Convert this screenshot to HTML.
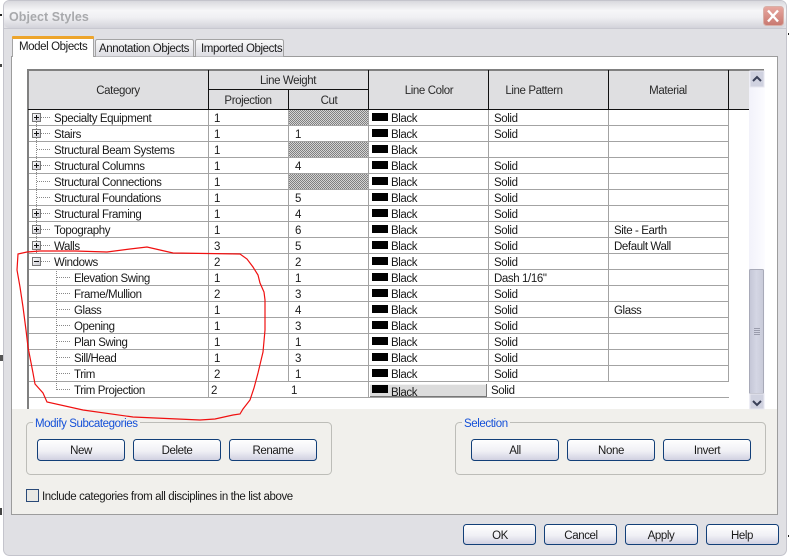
<!DOCTYPE html>
<html><head><meta charset="utf-8"><title>Object Styles</title>
<style>
html,body{margin:0;padding:0;background:#fff;width:790px;height:556px;overflow:hidden}
svg{display:block}
text{font-family:"Liberation Sans",sans-serif;font-size:11.5px;letter-spacing:-.4px;fill:#1a1a1a}
.b{text-anchor:middle}
.h{fill:#2a2a2a;text-anchor:middle}
.lg{fill:#1450d8}
.dot{stroke:#888;stroke-width:1;stroke-dasharray:1 1;fill:none}
.g{stroke:#a3a3a3;stroke-width:1;fill:none}
.k{stroke:#111;stroke-width:1;fill:none}
.btn{fill:url(#bg);stroke:#123f78;stroke-width:1}
.sw{fill:#000}
.pb{fill:url(#pg);stroke:#777}
</style></head><body>
<svg width="790" height="556" viewBox="0 0 790 556" xmlns="http://www.w3.org/2000/svg">
<defs>
<linearGradient id="tb" x1="0" y1="0" x2="0" y2="1"><stop offset="0" stop-color="#d9d9de"/><stop offset=".35" stop-color="#f6f6f8"/><stop offset=".6" stop-color="#f0f0f3"/><stop offset="1" stop-color="#d3d3da"/></linearGradient>
<linearGradient id="bg" x1="0" y1="0" x2="0" y2="1"><stop offset="0" stop-color="#ffffff"/><stop offset=".55" stop-color="#f0f0f5"/><stop offset="1" stop-color="#cfcfe0"/></linearGradient>
<linearGradient id="pg" x1="0" y1="0" x2="1" y2="1"><stop offset="0" stop-color="#fff"/><stop offset="1" stop-color="#c8c8d0"/></linearGradient>
<linearGradient id="th" x1="0" y1="0" x2="1" y2="0"><stop offset="0" stop-color="#c4c6d6"/><stop offset=".5" stop-color="#d4d6e4"/><stop offset="1" stop-color="#c8cad8"/></linearGradient>
<linearGradient id="tr" x1="0" y1="0" x2="1" y2="0"><stop offset="0" stop-color="#f2f2fa"/><stop offset="1" stop-color="#fcfcff"/></linearGradient>
<linearGradient id="cl" x1="0" y1="0" x2="0" y2="1"><stop offset="0" stop-color="#e8a8a0"/><stop offset="1" stop-color="#c87870"/></linearGradient>
<linearGradient id="tab" x1="0" y1="0" x2="0" y2="1"><stop offset="0" stop-color="#fafafa"/><stop offset="1" stop-color="#dcdce2"/></linearGradient>
<pattern id="ht" width="2" height="2" patternUnits="userSpaceOnUse"><rect width="2" height="2" fill="#d4d4d4"/><rect width="1" height="1" fill="#808080"/><rect x="1" y="1" width="1" height="1" fill="#808080"/></pattern>
</defs>

<!-- window -->
<rect x="3.5" y="0.5" width="783" height="555" rx="6" fill="#e0e0e4" stroke="#c4c4cc"/>
<rect x="4" y="1" width="782" height="27" rx="5" fill="url(#tb)"/>
<rect x="4" y="28" width="782" height="1" fill="#c8c8d0"/>
<text x="9" y="21" style="font-size:12.5px;font-weight:bold;fill:#a8a9ac;letter-spacing:.05px">Object Styles</text>
<rect x="763.5" y="6.5" width="20" height="19" rx="3" fill="url(#cl)" stroke="#d8b0a8"/>
<path d="M768 10.5l10 11M778 10.5l-10 11" stroke="#fff" stroke-width="2.4"/>
<rect x="0" y="14" width="2" height="2" fill="#222"/><rect x="0" y="64" width="2" height="3" fill="#444"/><rect x="0" y="355" width="3" height="6" fill="#555"/><rect x="0" y="508" width="2" height="7" fill="#444"/><rect x="788" y="33" width="1" height="2" fill="#222"/><rect x="788" y="535" width="1" height="2" fill="#222"/>

<!-- tab panel -->
<rect x="11.5" y="56.5" width="766" height="458" fill="#f1f0ec" stroke="#9c9c9c"/>
<rect x="12" y="57" width="765" height="352" fill="#fff"/>

<!-- tabs -->
<path d="M95.5 56.5V41.5q0-2 2-2h94q2 0 2 2v15" fill="url(#tab)" stroke="#a4a4a4"/>
<path d="M195.5 56.5V41.5q0-2 2-2h84q2 0 2 2v15" fill="url(#tab)" stroke="#a4a4a4"/>
<path d="M12.5 57V39.5q0-2 2-2h77q2 0 2 2V57" fill="#fff" stroke="#a4a4a4"/>
<rect x="12" y="36" width="82" height="3" rx="1" fill="#eda52c"/>
<rect x="13" y="55" width="80" height="3" fill="#fff"/>
<text x="19" y="50">Model Objects</text>
<text x="99" y="52">Annotation Objects</text>
<text x="201" y="52">Imported Objects</text>

<!-- table header -->
<rect x="28" y="70" width="721" height="40" fill="#dfdfe1"/>
<rect x="27" y="69" width="737" height="2" fill="#808080"/>
<rect x="27" y="69" width="2" height="340" fill="#808080"/>
<path class="k" d="M28 109.500H749M208.500 70V397M368.500 70V110M488.500 70V110M608.500 70V110M728.500 70V110M209 89.500H368M288.500 90V110"/>
<text class="h" x="118" y="94">Category</text>
<text class="h" x="288" y="84">Line Weight</text>
<text class="h" x="248" y="104">Projection</text>
<text class="h" x="329" y="104">Cut</text>
<text class="h" x="429" y="94">Line Color</text>
<text class="h" x="534" y="94">Line Pattern</text>
<text class="h" x="668" y="94">Material</text>

<!-- hatch -->
<rect x="289" y="110" width="79" height="15" fill="url(#ht)"/>
<rect x="289" y="142" width="79" height="15" fill="url(#ht)"/>
<rect x="289" y="174" width="79" height="15" fill="url(#ht)"/>

<!-- grid -->
<path class="g" d="M29 125.500H729M29 141.500H729M29 157.500H729M29 173.500H729M29 189.500H729M29 205.500H729M29 221.500H729M29 237.500H729M29 253.500H729M29 269.500H729M29 285.500H729M29 301.500H729M29 317.500H729M29 333.500H729M29 349.500H729M29 365.500H729M29 381.500H729M29 397.500H729"/>
<path class="g" d="M208.500 110V397M288.500 110V381M368.500 110V397M488.500 110V381M608.500 110V381M728.500 110V381"/>

<!-- tree lines -->
<path class="dot" d="M36.500 122V254M41 117.500H50M41 133.500H50M37 149.500H50M41 165.500H50M37 181.500H50M37 197.500H50M41 213.500H50M41 229.500H50M41 245.500H50M41 261.500H50"/>
<path class="dot" d="M56.500 271V390M57 277.500H71M57 293.500H71M57 309.500H71M57 325.500H71M57 341.500H71M57 357.500H71M57 373.500H71M57 389.500H71"/>
<g>
<rect class="pb" x="32.500" y="113.500" width="8" height="8"/><path class="k" d="M34 117.500H39M36.500 115V120"/>
<rect class="pb" x="32.500" y="129.500" width="8" height="8"/><path class="k" d="M34 133.500H39M36.500 131V136"/>
<rect class="pb" x="32.500" y="161.500" width="8" height="8"/><path class="k" d="M34 165.500H39M36.500 163V168"/>
<rect class="pb" x="32.500" y="209.500" width="8" height="8"/><path class="k" d="M34 213.500H39M36.500 211V216"/>
<rect class="pb" x="32.500" y="225.500" width="8" height="8"/><path class="k" d="M34 229.500H39M36.500 227V232"/>
<rect class="pb" x="32.500" y="241.500" width="8" height="8"/><path class="k" d="M34 245.500H39M36.500 243V248"/>
<rect class="pb" x="32.500" y="257.500" width="8" height="8"/><path class="k" d="M34 261.500H39"/>
</g>

<!-- category names -->
<text x="54" y="122">Specialty Equipment</text>
<text x="54" y="138">Stairs</text>
<text x="54" y="154">Structural Beam Systems</text>
<text x="54" y="170">Structural Columns</text>
<text x="54" y="186">Structural Connections</text>
<text x="54" y="202">Structural Foundations</text>
<text x="54" y="218">Structural Framing</text>
<text x="54" y="234">Topography</text>
<text x="54" y="250">Walls</text>
<text x="54" y="266">Windows</text>
<text x="74" y="282">Elevation Swing</text>
<text x="74" y="298">Frame/Mullion</text>
<text x="74" y="314">Glass</text>
<text x="74" y="330">Opening</text>
<text x="74" y="346">Plan Swing</text>
<text x="74" y="362">Sill/Head</text>
<text x="74" y="378">Trim</text>
<text x="74" y="394">Trim Projection</text>

<!-- projection -->
<text x="214" y="122">1</text><text x="214" y="138">1</text><text x="214" y="154">1</text><text x="214" y="170">1</text><text x="214" y="186">1</text><text x="214" y="202">1</text><text x="214" y="218">1</text><text x="214" y="234">1</text><text x="214" y="250">3</text><text x="214" y="266">2</text><text x="214" y="282">1</text><text x="214" y="298">2</text><text x="214" y="314">1</text><text x="214" y="330">1</text><text x="214" y="346">1</text><text x="214" y="362">1</text><text x="214" y="378">2</text><text x="211" y="394">2</text>

<!-- cut -->
<text x="295" y="138">1</text><text x="295" y="170">4</text><text x="295" y="202">5</text><text x="295" y="218">4</text><text x="295" y="234">6</text><text x="295" y="250">5</text><text x="295" y="266">2</text><text x="295" y="282">1</text><text x="295" y="298">3</text><text x="295" y="314">4</text><text x="295" y="330">3</text><text x="295" y="346">1</text><text x="295" y="362">3</text><text x="295" y="378">1</text><text x="291" y="394">1</text>

<!-- swatches -->
<path class="sw" d="M372 113h16v8h-16zM372 129h16v8h-16zM372 145h16v8h-16zM372 161h16v8h-16zM372 177h16v8h-16zM372 193h16v8h-16zM372 209h16v8h-16zM372 225h16v8h-16zM372 241h16v8h-16zM372 257h16v8h-16zM372 273h16v8h-16zM372 289h16v8h-16zM372 305h16v8h-16zM372 321h16v8h-16zM372 337h16v8h-16zM372 353h16v8h-16zM372 369h16v8h-16z"/>
<text x="391" y="122">Black</text><text x="391" y="138">Black</text><text x="391" y="154">Black</text><text x="391" y="170">Black</text><text x="391" y="186">Black</text><text x="391" y="202">Black</text><text x="391" y="218">Black</text><text x="391" y="234">Black</text><text x="391" y="250">Black</text><text x="391" y="266">Black</text><text x="391" y="282">Black</text><text x="391" y="298">Black</text><text x="391" y="314">Black</text><text x="391" y="330">Black</text><text x="391" y="346">Black</text><text x="391" y="362">Black</text><text x="391" y="378">Black</text>

<!-- black button -->
<rect x="370" y="384" width="117" height="12" fill="#dcdcdc"/>
<path d="M370 384.500H486.500V396" stroke="#f4f4f4" fill="none"/>
<path d="M370 396.500H487M486.500 384V396" stroke="#777" fill="none"/>
<rect x="372" y="385" width="16" height="8" fill="#000"/>
<text x="391" y="396">Black</text>

<!-- pattern -->
<text x="494" y="122">Solid</text><text x="494" y="138">Solid</text><text x="494" y="170">Solid</text><text x="494" y="186">Solid</text><text x="494" y="202">Solid</text><text x="494" y="218">Solid</text><text x="494" y="234">Solid</text><text x="494" y="250">Solid</text><text x="494" y="266">Solid</text><text x="494" y="282">Dash 1/16"</text><text x="494" y="298">Solid</text><text x="494" y="314">Solid</text><text x="494" y="330">Solid</text><text x="494" y="346">Solid</text><text x="494" y="362">Solid</text><text x="494" y="378">Solid</text><text x="491" y="394">Solid</text>

<!-- material -->
<text x="614" y="234">Site - Earth</text>
<text x="614" y="250">Default Wall</text>
<text x="614" y="314">Glass</text>

<!-- scrollbar -->
<rect x="749" y="71" width="16" height="338" fill="url(#tr)"/>
<rect x="750" y="71" width="14" height="16" fill="#d0d2e0" stroke="#e8e8f0"/>
<path d="M753 81l4-4 4 4" fill="none" stroke="#3a4058" stroke-width="2"/>
<rect x="749.500" y="269.500" width="14" height="124" rx="1" fill="url(#th)" stroke="#a8aab8"/>
<path d="M754 328.500h6M754 330.500h6M754 332.500h6M754 334.500h6" stroke="#9a9cac"/>
<rect x="750" y="394" width="14" height="15" fill="#d0d2e0" stroke="#e8e8f0"/>
<path d="M753 401l4 4 4-4" fill="none" stroke="#3a4058" stroke-width="2"/>

<!-- group boxes -->
<rect x="26.500" y="422.500" width="305" height="52" rx="4" fill="none" stroke="#bdbdb8"/>
<rect x="33" y="418" width="107" height="10" fill="#f1f0ec"/>
<text class="lg" x="35" y="427">Modify Subcategories</text>
<rect x="455.500" y="422.500" width="310" height="52" rx="4" fill="none" stroke="#bdbdb8"/>
<rect x="462" y="418" width="48" height="10" fill="#f1f0ec"/>
<text class="lg" x="464" y="427">Selection</text>

<!-- buttons -->
<rect class="btn" x="37.500" y="439.500" width="87" height="21" rx="3"/>
<rect class="btn" x="133.500" y="439.500" width="87" height="21" rx="3"/>
<rect class="btn" x="229.500" y="439.500" width="87" height="21" rx="3"/>
<rect class="btn" x="471.500" y="439.500" width="87" height="21" rx="3"/>
<rect class="btn" x="567.500" y="439.500" width="87" height="21" rx="3"/>
<rect class="btn" x="663.500" y="439.500" width="87" height="21" rx="3"/>
<text class="b" x="81" y="454">New</text>
<text class="b" x="177" y="454">Delete</text>
<text class="b" x="273" y="454">Rename</text>
<text class="b" x="515" y="454">All</text>
<text class="b" x="611" y="454">None</text>
<text class="b" x="707" y="454">Invert</text>

<!-- checkbox -->
<rect x="26.500" y="489.500" width="12" height="12" fill="#e8e8e4" stroke="#2a4a78"/>
<text x="42" y="500">Include categories from all disciplines in the list above</text>

<!-- bottom buttons -->
<rect class="btn" x="463.500" y="524.500" width="72" height="20" rx="3"/>
<rect class="btn" x="544.500" y="524.500" width="72" height="20" rx="3"/>
<rect class="btn" x="625.500" y="524.500" width="72" height="20" rx="3"/>
<rect class="btn" x="706.500" y="524.500" width="72" height="20" rx="3"/>
<text class="b" x="500" y="539">OK</text>
<text class="b" x="581" y="539">Cancel</text>
<text class="b" x="661" y="539">Apply</text>
<text class="b" x="742" y="539">Help</text>

<!-- red annotation -->
<path d="M18 254L27 252L40 251L75 251L107 252L130 249L147 247L160 250L173 253L240 254L247 259L253 267L258 275L260 283L264 292L265 300L265 330L263 352L258 373L254 388L250 400L243 409L240 414L233 415L215 419L200 420L133 417L83 410L47 402L43 393L35 384L33 373L28 347L26 330L23 307L20 287L17 270Z" fill="none" stroke="#f01010" stroke-width="1.2"/>
</svg>
</body></html>
